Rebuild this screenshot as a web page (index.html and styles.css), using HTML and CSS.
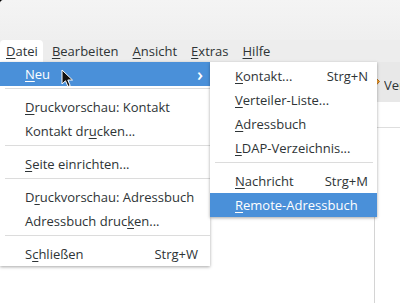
FILE: index.html
```html
<!doctype html>
<html lang="de">
<head>
  <meta charset="utf-8" />
  <title>Adressbuch – Datei</title>
  <link rel="stylesheet" href="styles.css">
</head>
<body>
  <div class="window">
    <div class="titlebar"></div>

    <nav class="menubar">
      <span class="top open"><u>D</u>atei</span>
      <span class="top"><u>B</u>earbeiten</span>
      <span class="top"><u>A</u>nsicht</span>
      <span class="top"><u>E</u>xtras</span>
      <span class="top"><u>H</u>ilfe</span>
    </nav>

    <div class="content">
      <div class="toolbar">
        <span class="tool">
          <svg width="16" height="16" viewBox="0 0 16 16"><path d="M3 14 L5 9 L11 2 L13.5 4.5 L7 11.5 Z" fill="#f0a030" stroke="#b86a10" stroke-width="1"/></svg>
          <span class="tool-label">Verfassen</span>
        </span>
      </div>
      <div class="panes">
        <div class="pane-left"></div>
        <div class="pane-right"><div class="pane-head"></div></div>
      </div>
    </div>

    <!-- Datei menu -->
    <div class="menu main">
      <div class="item hl"><span><u>N</u>eu</span><span class="arrow">›</span></div>
      <div class="sep"></div>
      <div class="item"><span><u>D</u>ruckvorschau: Kontakt</span></div>
      <div class="item"><span>Kontakt dr<u>u</u>cken...</span></div>
      <div class="sep"></div>
      <div class="item"><span><u>S</u>eite einrichten...</span></div>
      <div class="sep"></div>
      <div class="item"><span>D<u>r</u>uckvorschau: Adressbuch</span></div>
      <div class="item"><span>Adressbuch druc<u>k</u>en...</span></div>
      <div class="sep"></div>
      <div class="item"><span>S<u>c</u>hließen</span><span class="key">Strg+W</span></div>
    </div>

    <!-- Neu submenu -->
    <div class="menu sub">
      <div class="item"><span><u>K</u>ontakt...</span><span class="key">Strg+N</span></div>
      <div class="item"><span><u>V</u>erteiler-Liste...</span></div>
      <div class="item"><span><u>A</u>dressbuch</span></div>
      <div class="item"><span><u>L</u>DAP-Verzeichnis...</span></div>
      <div class="sep"></div>
      <div class="item"><span><u>N</u>achricht</span><span class="key">Strg+M</span></div>
      <div class="item hl"><span><u>R</u>emote-Adressbuch</span></div>
    </div>

    <svg class="cursor" width="14" height="20" viewBox="0 0 14 20">
      <path d="M1 1 L1 15 L4.5 11.8 L7 17.5 L9.2 16.5 L6.8 11 L11.5 11 Z" fill="#111" stroke="#fff" stroke-width="1" stroke-linejoin="round"/>
    </svg>
  </div>
</body>
</html>
```

FILE: styles.css
```css
*{box-sizing:border-box}
html,body{margin:0; height:100%}
body{
  background:#000;
  font-family:"Open Sans", "DejaVu Sans", sans-serif;
  font-size:13px;
  color:#2e3436;
  overflow:hidden;
}

.window{
  position:relative;
  width:400px; height:303px;
  background:#ededed;
  border-top-left-radius:4px;
  overflow:hidden;
  display:flex; flex-direction:column;
}

.titlebar{height:40px; background:linear-gradient(#f4f4f4, #efefef)}

.menubar{
  height:22px; display:flex; align-items:stretch;
  background:#ededed;
}
.menubar .top{
  display:flex; align-items:center;
  padding:0 7px; line-height:1;
  border-radius:4px 4px 0 0;
}
.menubar .top.open{background:#fff; padding:0 5px 0 6px; margin-right:2px}

u{text-decoration-thickness:1px; text-underline-offset:2px}

.content{flex:1; display:flex; flex-direction:column}
.toolbar{
  height:40px; background:#e8e8e8;
  display:flex; align-items:center; justify-content:flex-end;
}
.tool{display:flex; align-items:center; gap:2px; width:34px; overflow:hidden; white-space:nowrap; padding-top:6px}
.tool svg{flex:none}
.tool-label{overflow:hidden}

.panes{flex:1; display:flex; background:#fff}
.pane-left{width:375px; border-right:1px solid #d4d4d4}
.pane-right{flex:1}
.pane-head{height:26px; border-bottom:1px solid #dedede}

.menu{
  position:absolute; top:62px;
  background:#fff;
  box-shadow:0 1px 3px rgba(0,0,0,.35);
  white-space:nowrap;
}
.menu.main{left:0; width:210px}
.menu.sub{left:210px; width:167px; padding-top:2px}

.item{
  height:24px; display:flex; align-items:center; justify-content:space-between;
  padding:0 12px 0 25px;
}
.menu.sub .item{padding:0 9px 0 25px}
.item.hl{background:#4a90d9; color:#fff}
.arrow{font-size:18px; line-height:1; margin-right:-5px; font-weight:600}
.key{margin-left:20px}

.sep{height:1px; background:#dcdcdc; margin:2px 0 6px 5px}
.menu.sub .sep{margin:2px 4px 6px 5px}

.cursor{position:absolute; left:61px; top:69px}
```
